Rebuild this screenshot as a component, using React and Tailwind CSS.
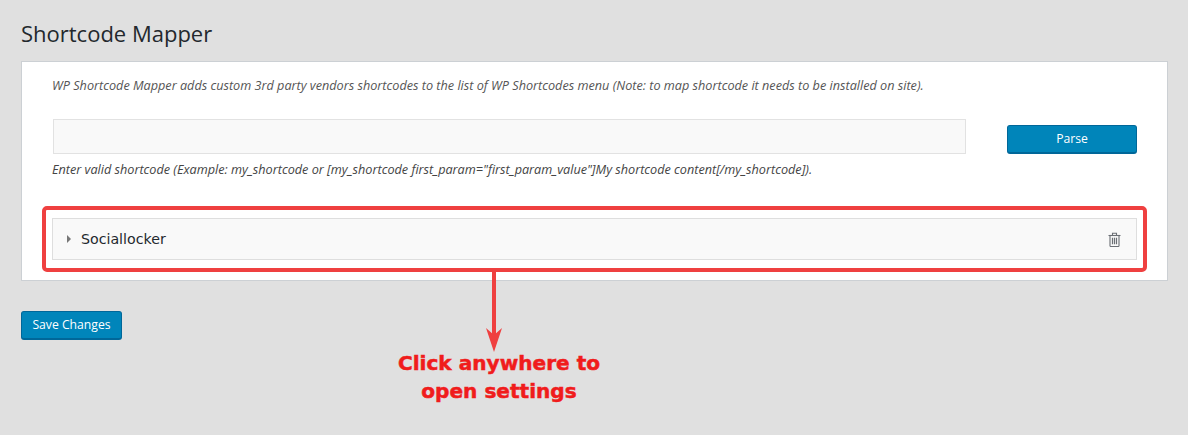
import React from 'react';

const TrashIcon = () => (
  <svg width="13" height="15" viewBox="0 0 13 15" fill="none" stroke="#6b6f75" strokeWidth="1.1">
    <path d="M0.5 3.5h12" />
    <path d="M4.5 3.2V1.2h4v2" />
    <path d="M2 3.5v10.2c0 .4.3.8.8.8h7.4c.5 0 .8-.4.8-.8V3.5" />
    <path d="M4.5 5.8v6.4M6.5 5.8v6.4M8.5 5.8v6.4" strokeWidth="1.2" />
  </svg>
);

const Arrow = () => (
  <svg width="18" height="82" viewBox="0 0 18 82" className="block">
    <path d="M7 0h4v64H7z" fill="#ef4040" />
    <path d="M1 57L9 64l8-7L9 81z" fill="#ef4040" />
  </svg>
);

export default function App() {
  return (
    <div className="relative w-[1188px] h-[435px] overflow-hidden bg-[#e0e0e0] font-['Open_Sans','Noto_Sans',sans-serif] text-[#444]">
      <h1 className="pl-[21px] pt-[19px] h-[61px] text-[22px] leading-[29px] text-[#23282d]">Shortcode Mapper</h1>

      <div className="relative ml-[21px] w-[1147px] h-[220px] bg-white border border-[#ccd0d4] pl-[30px]">
        <p className="pt-[14px] text-[12.66px] leading-[18px] italic text-[#555] whitespace-nowrap">
          WP Shortcode Mapper adds custom 3rd party vendors shortcodes to the list of WP Shortcodes menu (Note: to map shortcode it needs to be installed on site).
        </p>

        <div className="flex items-start mt-[25px]">
          <div className="ml-px w-[913px] h-[35px] bg-[#f9f9f9] border border-[#e2e2e2]" />
          <button className="ml-[41px] mt-[6px] pt-px w-[130px] h-[29px] rounded-[3px] bg-[#0085ba] border border-[#006799] border-b-2 text-white text-[12.2px] leading-none">
            Parse
          </button>
        </div>

        <p className="mt-[6px] text-[12.66px] leading-[18px] italic text-[#444] whitespace-nowrap">
          Enter valid shortcode (Example: my_shortcode or [my_shortcode first_param="first_param_value"]My shortcode content[/my_shortcode]).
        </p>

        <div className="flex items-center mt-[40px] w-[1085px] h-[42px] bg-[#f9f9f9] border border-[#dedede] pl-[14px] pr-[15px]">
          <span className="w-0 h-0 border-y-[4px] border-y-transparent border-l-[4px] border-l-[#777]" />
          <span className="ml-[10px] pt-px flex-1 font-['DejaVu_Sans',sans-serif] text-[14.2px] text-[#23282d]">Sociallocker</span>
          <TrashIcon />
        </div>

        {/* annotation frame over the accordion row */}
        <div className="absolute left-[20px] top-[144px] w-[1105px] h-[66px] border-[4px] border-[#ef4040] rounded-[5px]" />
      </div>

      <button className="block ml-[21px] mt-[30px] w-[101px] h-[29px] rounded-[3px] bg-[#0085ba] border border-[#006799] border-b-2 text-white text-[12.2px] leading-none">
        Save Changes
      </button>

      {/* annotation arrow and caption */}
      <div className="absolute left-[485px] top-[271px]">
        <Arrow />
      </div>
      <div className="absolute left-[349px] top-[349px] w-[300px] text-center font-['DejaVu_Sans',sans-serif] font-bold text-[20.1px] leading-[28px] text-[#f01c1c] [-webkit-text-stroke:0.5px_#f01c1c]">
        <div>Click anywhere to</div>
        <div>open settings</div>
      </div>
    </div>
  );
}
